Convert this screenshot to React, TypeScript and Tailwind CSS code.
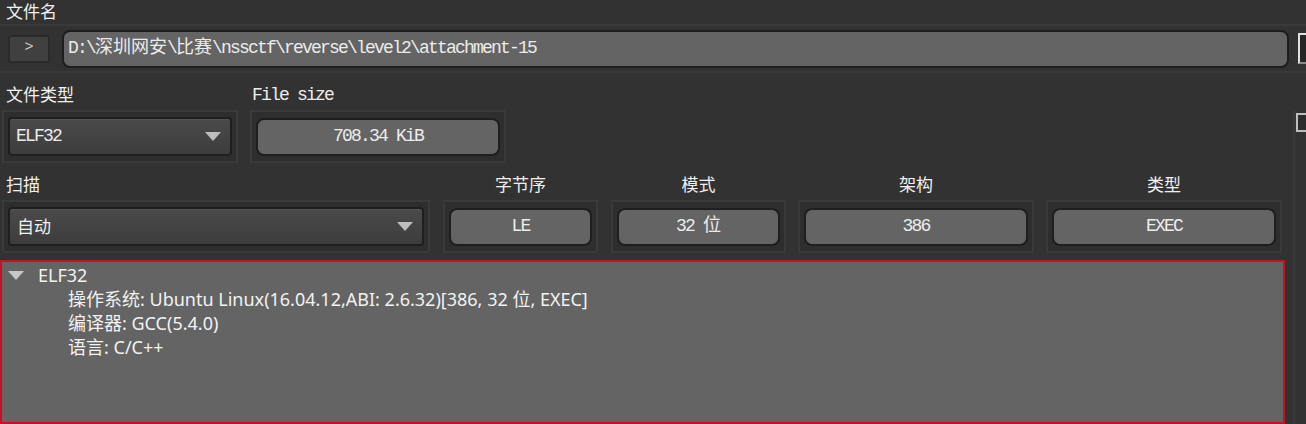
import React from 'react';

const mono = "font-['Liberation_Mono','Noto_Sans_CJK_SC',monospace] text-[18px] tracking-[-1.8px] text-[#ececec]";
const ui = "font-['Noto_Sans','Noto_Sans_CJK_SC',sans-serif]";

const Cjk: React.FC<{ children: React.ReactNode }> = ({ children }) => (
  <span className="text-[18px] tracking-normal">{children}</span>
);

const Frame: React.FC<{ className?: string; children: React.ReactNode }> = ({ className = '', children }) => (
  <div className={`h-[53px] border-2 border-[#3a3a3a] bg-[#2e2e2e] px-[4px] flex items-center ${className}`}>{children}</div>
);

const Field: React.FC<{ children: React.ReactNode }> = ({ children }) => (
  <div className={`h-[38px] w-full rounded-[8px] border-2 border-[#1e1e1e] bg-[#646464] flex items-center justify-center ${mono}`}>
    <span className="whitespace-pre">{children}</span>
  </div>
);

const Combo: React.FC<{ children: React.ReactNode; cjk?: boolean }> = ({ children, cjk }) => (
  <div className="h-[39px] w-full rounded-[4px] border-2 border-[#1f1f1f] bg-gradient-to-b from-[#4a4a4a] to-[#3d3d3d] shadow-[inset_0_1px_0_#555] flex items-center pl-[6px] pr-[9px]">
    <span className={cjk ? `${ui} text-[17px] text-[#f0f0f0] pl-[1px]` : mono}>{children}</span>
    <svg className="ml-auto" width="16" height="9" viewBox="0 0 16 9">
      <path d="M0 0 L16 0 L8 9 Z" fill="#bdbdbd" />
    </svg>
  </div>
);

const Label: React.FC<{ children: React.ReactNode; center?: boolean }> = ({ children, center }) => (
  <div className={`h-[37px] pt-[7px] flex items-center text-[17px] text-[#f0f0f0] ${ui} ${center ? 'justify-center' : 'pl-[4px]'}`}>
    {children}
  </div>
);

export default function App() {
  return (
    <div className="w-[1306px] h-[424px] overflow-hidden bg-[#323232] flex flex-col">
      {/* file name */}
      <div className={`h-[24px] pl-[6px] flex items-center text-[17px] text-[#f0f0f0] ${ui}`}>文件名</div>
      <div className="h-[49px] border-y-2 border-[#3a3a3a] flex items-center">
        <div className="shrink-0 ml-[8px] w-[42px] h-[28px] rounded-[3px] border-2 border-[#2a2a2a] bg-[#404040] flex items-center justify-center">
          <span className="font-['Liberation_Mono',monospace] text-[15px] text-[#cfcfcf]">&gt;</span>
        </div>
        <div className={`shrink-0 ml-[12px] w-[1227px] h-[38px] rounded-[8px] border-2 border-[#1e1e1e] bg-[#646464] flex items-center pl-[4px] ${mono}`}>
          <span>
            D:\<Cjk>深圳网安</Cjk>\<Cjk>比赛</Cjk>\nssctf\reverse\level2\attachment-15
          </span>
        </div>
        <div className="shrink-0 ml-[9px] w-[14px] h-[31px] border-2 border-[#e0e0e0] border-b-[#8a8a8a] bg-[#262626]" />
      </div>

      <div className="flex flex-1 min-h-0">
        <div className="shrink-0 w-[1285px] flex flex-col">
          {/* type + size */}
          <div className="flex">
            <div className="ml-[2px] w-[236px]">
              <Label>文件类型</Label>
              <Frame>
                <Combo>ELF32</Combo>
              </Frame>
            </div>
            <div className="ml-[12px] w-[256px]">
              <div className={`h-[37px] pt-[7px] flex items-center pl-[2px] ${mono}`}>File size</div>
              <Frame>
                <Field>708.34 KiB</Field>
              </Frame>
            </div>
          </div>

          {/* scan row */}
          <div className="flex">
            <div className="ml-[2px] w-[428px]">
              <Label>扫描</Label>
              <Frame>
                <Combo cjk>自动</Combo>
              </Frame>
            </div>
            <div className="ml-[13px] w-[155px]">
              <Label center>字节序</Label>
              <Frame>
                <Field>LE</Field>
              </Frame>
            </div>
            <div className="ml-[13px] w-[175px]">
              <Label center>模式</Label>
              <Frame>
                <Field>
                  {'32 '}
                  <Cjk>位</Cjk>
                </Field>
              </Frame>
            </div>
            <div className="ml-[12px] w-[236px]">
              <Label center>架构</Label>
              <Frame>
                <Field>386</Field>
              </Frame>
            </div>
            <div className="ml-[12px] w-[236px]">
              <Label center>类型</Label>
              <Frame>
                <Field>EXEC</Field>
              </Frame>
            </div>
          </div>

          {/* result tree */}
          <div className={`mt-[7px] flex-1 border-2 border-[#c8101e] bg-[#646464] pt-[1px] text-[18px] text-[#f2f2f2] ${ui}`}>
            <div className="h-[24px] flex items-center">
              <svg className="ml-[6px]" width="16" height="9" viewBox="0 0 16 9">
                <path d="M0 0 L16 0 L8 9 Z" fill="#c8c8c8" />
              </svg>
              <span className="ml-[14px]">ELF32</span>
            </div>
            <div className="h-[24px] flex items-center pl-[66px]">操作系统: Ubuntu Linux(16.04.12,ABI: 2.6.32)[386, 32 位, EXEC]</div>
            <div className="h-[24px] flex items-center pl-[66px]">编译器: GCC(5.4.0)</div>
            <div className="h-[24px] flex items-center pl-[66px]">语言: C/C++</div>
          </div>
        </div>

        {/* right side strip */}
        <div className="shrink-0 ml-[8px] mt-[37px] w-[13px] border-l-2 border-[#3a3a3a] pl-[1px] pt-[3px]">
          <div className="w-[14px] h-[19px] border-2 border-[#bdbdbd] bg-[#2c2c2c]" />
        </div>
      </div>
    </div>
  );
}
